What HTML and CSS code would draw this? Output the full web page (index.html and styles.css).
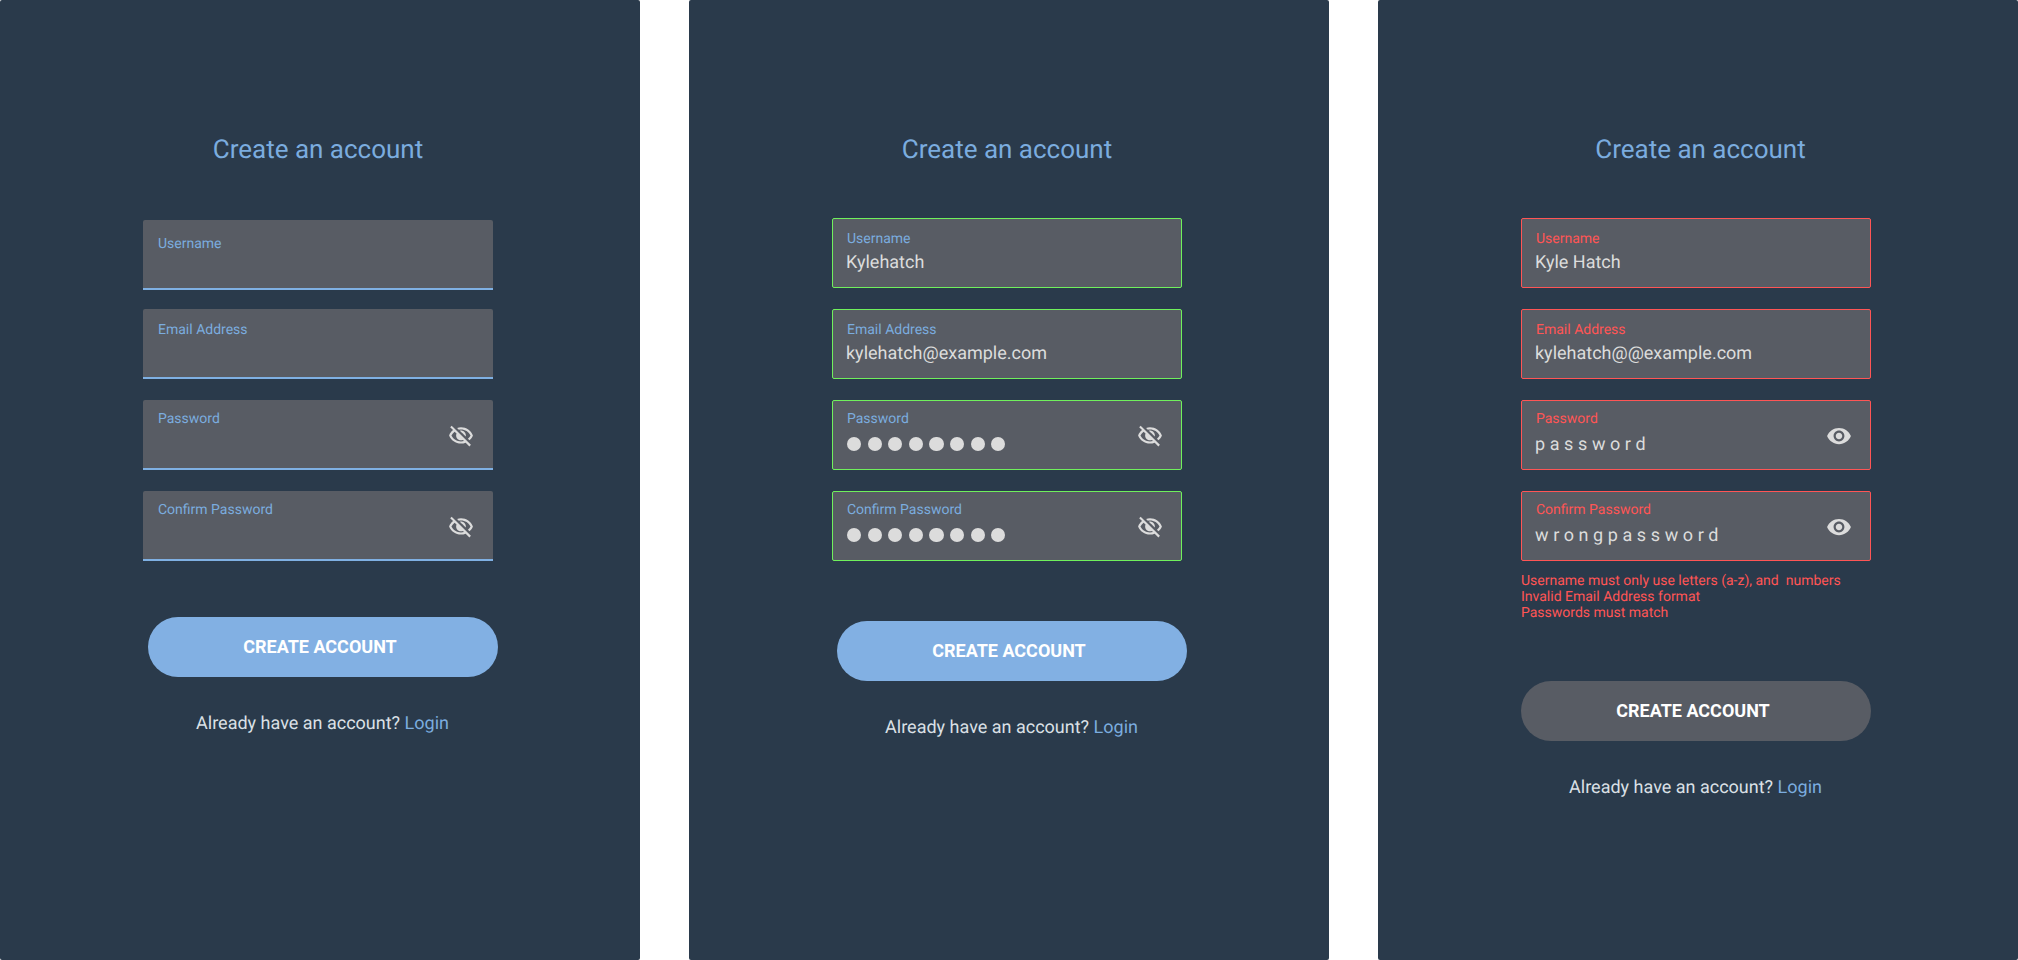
FILE: index.html
```html
<!DOCTYPE html>
<html lang="en">
<head>
    <meta charset="UTF-8">
    <meta name="viewport" content="width=device-width, initial-scale=1.0">
    <title>Create an account</title>
    <link rel="stylesheet" href="styles.css">
</head>
<body>

    <!-- Icons used by the password fields -->
    <svg class="icon-defs" width="0" height="0">
        <symbol id="eye-off" viewBox="0 0 24 24">
            <path d="M12 6c3.79 0 7.17 2.13 8.82 5.5-.59 1.22-1.42 2.27-2.41 3.12l1.41 1.41c1.39-1.23 2.49-2.77 3.18-4.53C21.27 7.11 17 4 12 4c-1.27 0-2.49.2-3.64.57l1.65 1.65C10.66 6.09 11.32 6 12 6zm-1.07 1.14L13 9.21c.57.25 1.03.71 1.28 1.28l2.07 2.07c.08-.34.14-.7.14-1.07C16.5 9.01 14.48 7 12 7c-.37 0-.72.05-1.07.14zM2.01 3.87l2.68 2.68C3.06 7.83 1.77 9.53 1 11.5 2.73 15.89 7 19 12 19c1.52 0 2.98-.29 4.32-.82l3.42 3.42 1.41-1.41L3.42 2.45 2.01 3.87zm4.1 4.1l1.75 1.75c-.23.55-.36 1.15-.36 1.78 0 2.48 2.02 4.5 4.5 4.5.63 0 1.23-.13 1.77-.36l.98.98c-.88.24-1.8.38-2.75.38-3.79 0-7.17-2.13-8.82-5.5.7-1.43 1.72-2.61 2.93-3.53z"/>
        </symbol>
        <symbol id="eye" viewBox="0 0 24 24">
            <path d="M12 4.5C7 4.5 2.73 7.61 1 12c1.73 4.39 6 7.5 11 7.5s9.27-3.11 11-7.5c-1.73-4.39-6-7.5-11-7.5zM12 17c-2.76 0-5-2.24-5-5s2.24-5 5-5 5 2.24 5 5-2.24 5-5 5zm0-8c-1.66 0-3 1.34-3 3s1.34 3 3 3 3-1.34 3-3-1.34-3-3-3z"/>
        </symbol>
    </svg>

    <!-- Empty state -->
    <section class="panel">
        <form class="form">
            <h2 class="title">Create an account</h2>
            <div class="fields">
                <div class="field field-low">
                    <div class="field-text">
                        <label class="label label-low">Username</label>
                    </div>
                </div>
                <div class="field">
                    <div class="field-text">
                        <label class="label">Email Address</label>
                    </div>
                </div>
                <div class="field">
                    <div class="field-text field-text-pw">
                        <label class="label">Password</label>
                    </div>
                    <svg class="eye-icon"><use href="#eye-off"/></svg>
                </div>
                <div class="field">
                    <div class="field-text field-text-pw">
                        <label class="label">Confirm Password</label>
                    </div>
                    <svg class="eye-icon"><use href="#eye-off"/></svg>
                </div>
            </div>
            <button class="btn btn-first" type="button">CREATE ACCOUNT</button>
            <p class="footer">Already have an account? <a class="login" href="#">Login</a></p>
        </form>
    </section>

    <!-- Valid state -->
    <section class="panel">
        <form class="form">
            <h2 class="title">Create an account</h2>
            <div class="fields">
                <div class="field field-valid">
                    <div class="field-text">
                        <label class="label">Username</label>
                        <span class="value">Kylehatch</span>
                    </div>
                </div>
                <div class="field field-valid">
                    <div class="field-text">
                        <label class="label">Email Address</label>
                        <span class="value">kylehatch@example.com</span>
                    </div>
                </div>
                <div class="field field-valid">
                    <div class="field-text field-text-pw">
                        <label class="label">Password</label>
                        <span class="dots"><i></i><i></i><i></i><i></i><i></i><i></i><i></i><i></i></span>
                    </div>
                    <svg class="eye-icon"><use href="#eye-off"/></svg>
                </div>
                <div class="field field-valid">
                    <div class="field-text field-text-pw">
                        <label class="label">Confirm Password</label>
                        <span class="dots"><i></i><i></i><i></i><i></i><i></i><i></i><i></i><i></i></span>
                    </div>
                    <svg class="eye-icon"><use href="#eye-off"/></svg>
                </div>
            </div>
            <button class="btn btn-shift" type="button">CREATE ACCOUNT</button>
            <p class="footer">Already have an account? <a class="login" href="#">Login</a></p>
        </form>
    </section>

    <!-- Error state -->
    <section class="panel">
        <form class="form">
            <h2 class="title title-shift">Create an account</h2>
            <div class="fields">
                <div class="field field-error">
                    <div class="field-text">
                        <label class="label">Username</label>
                        <span class="value">Kyle Hatch</span>
                    </div>
                </div>
                <div class="field field-error">
                    <div class="field-text">
                        <label class="label">Email Address</label>
                        <span class="value">kylehatch@@example.com</span>
                    </div>
                </div>
                <div class="field field-error">
                    <div class="field-text field-text-pw">
                        <label class="label">Password</label>
                        <span class="value value-spaced">password</span>
                    </div>
                    <svg class="eye-icon"><use href="#eye"/></svg>
                </div>
                <div class="field field-error">
                    <div class="field-text field-text-pw">
                        <label class="label">Confirm Password</label>
                        <span class="value value-spaced">wrongpassword</span>
                    </div>
                    <svg class="eye-icon"><use href="#eye"/></svg>
                </div>
            </div>
            <ul class="errors">
                <li>Username must only use letters (a-z), and &nbsp;numbers</li>
                <li>Invalid Email Address format</li>
                <li>Passwords must match</li>
            </ul>
            <button class="btn btn-disabled" type="button">CREATE ACCOUNT</button>
            <p class="footer footer-plain">Already have an account? <a class="login" href="#">Login</a></p>
        </form>
    </section>

</body>
</html>
```

FILE: styles.css
```css
* {
    box-sizing: border-box;
}
body {
    margin: 0;
    height: 960px;
    display: flex;
    gap: 49px;
    background-color: #fff;
    font-family: Roboto, Arial, sans-serif;
    text-rendering: geometricPrecision;
    overflow: hidden;
}
.icon-defs {
    position: absolute;
}
.panel {
    width: 640px;
    height: 960px;
    padding: 135px 0 0 143px;
    background-color: #2a3a4b;
    border-radius: 2px;
}
.form {
    width: 350px;
    display: flex;
    flex-direction: column;
}
.title {
    margin: 0 0 53px;
    font-size: 26px;
    line-height: 30px;
    font-weight: 400;
    text-align: center;
    color: #7bacdf;
}
.title-shift {
    padding-left: 9px;
}
.fields {
    display: flex;
    flex-direction: column;
    gap: 21px;
}
.field {
    height: 70px;
    padding: 11px 19px 0 15px;
    display: flex;
    justify-content: space-between;
    background-color: #585c64;
    border-bottom: 2px solid #7fb0e3;
    border-radius: 2px 2px 0 0;
}
.field-low {
    margin: 2px 0 -2px;
}
.field-valid,
.field-error {
    padding: 10px 18px 0 14px;
    border: 1px solid #70f05c;
    border-radius: 2px;
}
.field-error {
    border-color: #ff5555;
}
.field-text {
    display: flex;
    flex-direction: column;
    align-items: flex-start;
}
.field-text-pw {
    margin-top: -2px;
}
.label {
    font-size: 14px;
    line-height: 20px;
    color: #7bacdf;
}
.label-low {
    margin-top: 3px;
}
.field-error .label {
    color: #ff5555;
}
.value {
    margin: 2px 0 0 -1px;
    font-size: 18px;
    line-height: 24px;
    color: #dcdcdc;
}
.value-spaced {
    margin-top: 4px;
    letter-spacing: 4.6px;
}
.dots {
    margin-top: 8px;
    display: flex;
    gap: 6.3px;
}
.dots i {
    width: 14.3px;
    height: 14.3px;
    border-radius: 50%;
    background-color: #dcdcdc;
}
.eye-icon {
    width: 26px;
    height: 26px;
    margin-top: 12px;
    fill: #dcdcdc;
}
.errors {
    margin: 12px 0 0;
    padding: 0;
    list-style: none;
    font-size: 14px;
    line-height: 16px;
    color: #ff5555;
}
.btn {
    width: 350px;
    height: 60px;
    margin-top: 60px;
    padding: 0 6px 2px 0;
    border: none;
    border-radius: 30px;
    background-color: #82b0e3;
    color: #fff;
    font-family: inherit;
    font-size: 18px;
    font-weight: 700;
    cursor: pointer;
}
.btn-first {
    margin-top: 56px;
    margin-left: 5px;
}
.btn-shift {
    margin-left: 5px;
}
.btn-disabled {
    background-color: #585c64;
}
.footer {
    margin: 35px 0 0;
    padding-left: 9px;
    font-size: 18px;
    line-height: 24px;
    text-align: center;
    color: #dbe0e6;
}
.footer-plain {
    padding-left: 0;
    margin-left: -1px;
}
.login {
    color: #7bacdf;
    text-decoration: none;
}
```
